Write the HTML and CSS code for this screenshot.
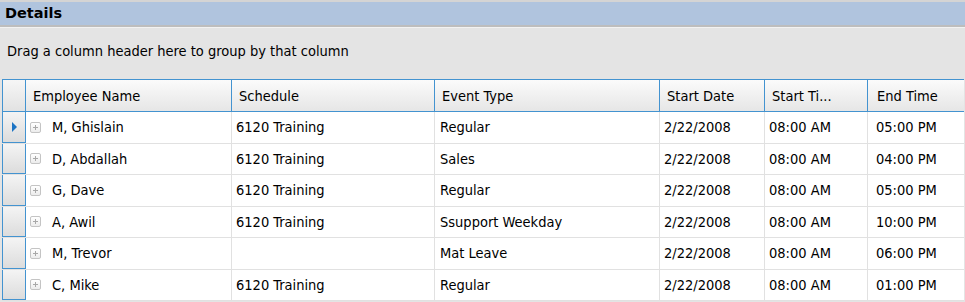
FILE: index.html
```html
<!DOCTYPE html>
<html lang="en">
<head>
  <meta charset="UTF-8" />
  <title>Details</title>
  <link rel="stylesheet" href="styles.css">
</head>
<body>
  <div class="panel">
    <div class="title">Details</div>
    <div class="grouparea">Drag a column header here to group by that column</div>

    <div class="grid">
      <div class="row head">
        <div class="sel"></div>
        <div class="c c1">Employee Name</div>
        <div class="c c2">Schedule</div>
        <div class="c c3">Event Type</div>
        <div class="c c4">Start Date</div>
        <div class="c c5">Start Ti...</div>
        <div class="c c6">End Time</div>
      </div>

      <div class="row">
        <div class="sel current"><span class="arrow"></span></div>
        <div class="c c1"><span class="exp"></span>M, Ghislain</div>
        <div class="c c2">6120 Training</div>
        <div class="c c3">Regular</div>
        <div class="c c4">2/22/2008</div>
        <div class="c c5">08:00 AM</div>
        <div class="c c6">05:00 PM</div>
      </div>
      <div class="row">
        <div class="sel"></div>
        <div class="c c1"><span class="exp"></span>D, Abdallah</div>
        <div class="c c2">6120 Training</div>
        <div class="c c3">Sales</div>
        <div class="c c4">2/22/2008</div>
        <div class="c c5">08:00 AM</div>
        <div class="c c6">04:00 PM</div>
      </div>
      <div class="row">
        <div class="sel"></div>
        <div class="c c1"><span class="exp"></span>G, Dave</div>
        <div class="c c2">6120 Training</div>
        <div class="c c3">Regular</div>
        <div class="c c4">2/22/2008</div>
        <div class="c c5">08:00 AM</div>
        <div class="c c6">05:00 PM</div>
      </div>
      <div class="row">
        <div class="sel"></div>
        <div class="c c1"><span class="exp"></span>A, Awil</div>
        <div class="c c2">6120 Training</div>
        <div class="c c3">Ssupport Weekday</div>
        <div class="c c4">2/22/2008</div>
        <div class="c c5">08:00 AM</div>
        <div class="c c6">10:00 PM</div>
      </div>
      <div class="row">
        <div class="sel"></div>
        <div class="c c1"><span class="exp"></span>M, Trevor</div>
        <div class="c c2"></div>
        <div class="c c3">Mat Leave</div>
        <div class="c c4">2/22/2008</div>
        <div class="c c5">08:00 AM</div>
        <div class="c c6">06:00 PM</div>
      </div>
      <div class="row">
        <div class="sel"></div>
        <div class="c c1"><span class="exp"></span>C, Mike</div>
        <div class="c c2">6120 Training</div>
        <div class="c c3">Regular</div>
        <div class="c c4">2/22/2008</div>
        <div class="c c5">08:00 AM</div>
        <div class="c c6">01:00 PM</div>
      </div>
    </div>
  </div>
</body>
</html>
```

FILE: styles.css
```css
* {
  margin: 0;
  padding: 0;
  box-sizing: border-box;
}
body {
  background-color: #ffffff;
  font-family: "DejaVu Sans Condensed", "DejaVu Sans", sans-serif;
  font-size: 14.5px;
  color: #000;
}
.panel {
  width: 965px;
  height: 302px;
  background-color: #e4e4e4;
}
.title {
  height: 27px;
  padding: 3px 0 0 5px;
  background-color: #b0c4de;
  border-top: 2px solid #d4d4d4;
  border-bottom: 2px solid #bdbdbd;
  font-family: "DejaVu Sans", sans-serif;
  font-weight: bold;
  font-size: 14.5px;
}
.grouparea {
  height: 52px;
  padding: 15px 0 0 7px;
  border-top: 1px solid #f2f2f2;
}
.grid {
  margin-left: 2px;
  width: 962px;
  background-color: #fff;
}
.row {
  display: flex;
  height: 31.5px;
  border-bottom: 1px solid #e1e1e1;
}
.c {
  display: flex;
  align-items: center;
  padding-left: 5px;
  border-right: 1px solid #e1e1e1;
  white-space: nowrap;
  overflow: hidden;
}
.sel {
  width: 24px;
  flex: none;
  border: 1px solid #4393d0;
  border-top: none;
  background: linear-gradient(#f4f4f4, #dcdcdc);
  display: flex;
  align-items: center;
  justify-content: center;
}
.c1 { width: 206px; padding-left: 4px; }
.c2 { width: 203px; padding-left: 4px; }
.c3 { width: 225px; padding-left: 5px; }
.c4 { width: 105px; padding-left: 4px; }
.c5 { width: 103px; padding-left: 4px; }
.c6 { width: 96px; padding-left: 8px; border-right: none; }

.head {
  height: 33px;
  border-top: 1px solid #4393d0;
  border-bottom: 1px solid #4393d0;
  background: linear-gradient(#fbfbfb, #e6e6e6);
}
.head .sel {
  border-top: none;
  border-bottom: none;
  background: linear-gradient(#f6f6f6, #e2e2e2);
}
.head .c {
  border-right: 1px solid #4393d0;
  padding-left: 7px;
}
.head .c1 { padding-left: 7px; }
.head .c6 { padding-left: 9px; border-right: none; }

.exp {
  width: 11px;
  height: 11px;
  margin-right: 11px;
  border: 1px solid #c4c4c4;
  border-radius: 2px;
  position: relative;
  flex: none;
  background: linear-gradient(#ffffff, #ececec);
}
.exp::before,
.exp::after {
  content: "";
  position: absolute;
  background-color: #a8a8a8;
}
.exp::before {
  left: 2px;
  top: 4px;
  width: 5px;
  height: 1px;
}
.exp::after {
  left: 4px;
  top: 2px;
  width: 1px;
  height: 5px;
}
.arrow {
  width: 0;
  height: 0;
  border-top: 5px solid transparent;
  border-bottom: 5px solid transparent;
  border-left: 5px solid #1c74c4;
}
```
